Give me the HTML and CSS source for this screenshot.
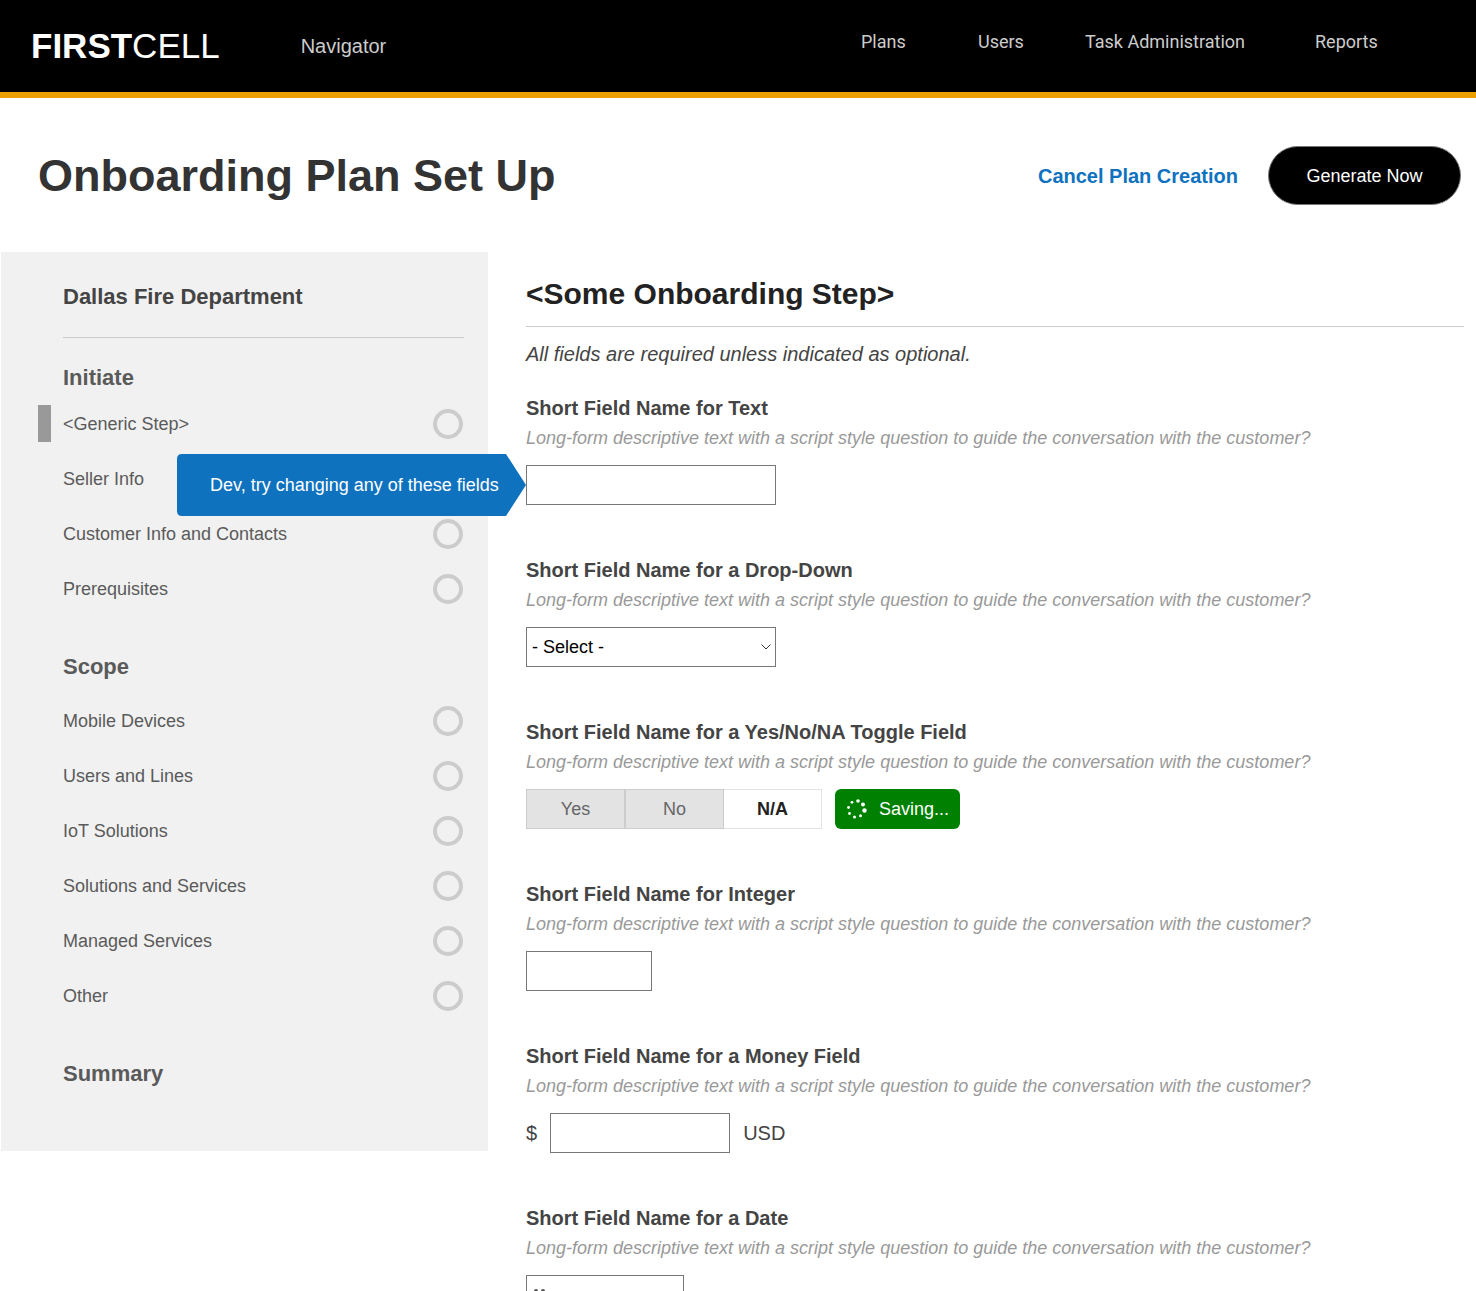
FILE: index.html
```html
<!DOCTYPE html>
<html lang="en">
<head>
<meta charset="utf-8">
<meta name="viewport" content="width=device-width, initial-scale=1">
<title>Onboarding Plan Set Up</title>
<link rel="stylesheet" href="styles.css">
</head>
<body>
<header class="topbar">
  <a class="brand" href="#"><b>FIRST</b>CELL</a>
  <a class="product" href="#">Navigator</a>
  <nav class="topnav" aria-label="Main">
    <a href="#">Plans</a>
    <a href="#">Users</a>
    <a href="#">Task Administration</a>
    <a href="#">Reports</a>
  </nav>
</header>

<div class="page-head">
  <h1>Onboarding Plan Set Up</h1>
  <a class="cancel" href="#">Cancel Plan Creation</a>
  <button class="generate" type="button">Generate Now</button>
</div>

<div class="columns">
  <aside class="sidebar">
    <h2 class="customer">Dallas Fire Department</h2>
    <nav aria-label="Plan steps">
      <h3 class="phase">Initiate</h3>
      <ul class="steps">
        <li><a class="step current" href="#">&lt;Generic Step&gt;<span class="ring"></span></a></li>
        <li><a class="step" href="#">Seller Info<span class="ring"></span></a></li>
        <li><a class="step" href="#">Customer Info and Contacts<span class="ring"></span></a></li>
        <li><a class="step" href="#">Prerequisites<span class="ring"></span></a></li>
      </ul>
      <h3 class="phase spaced">Scope</h3>
      <ul class="steps">
        <li><a class="step" href="#">Mobile Devices<span class="ring"></span></a></li>
        <li><a class="step" href="#">Users and Lines<span class="ring"></span></a></li>
        <li><a class="step" href="#">IoT Solutions<span class="ring"></span></a></li>
        <li><a class="step" href="#">Solutions and Services<span class="ring"></span></a></li>
        <li><a class="step" href="#">Managed Services<span class="ring"></span></a></li>
        <li><a class="step" href="#">Other<span class="ring"></span></a></li>
      </ul>
      <h3 class="phase spaced">Summary</h3>
    </nav>
  </aside>

  <main class="content">
    <h2 class="step-title">&lt;Some Onboarding Step&gt;</h2>
    <p class="note">All fields are required unless indicated as optional.</p>
    <form class="fields">
      <div class="field">
        <label class="name" for="text">Short Field Name for Text</label>
        <p class="help">Long-form descriptive text with a script style question to guide the conversation with the customer?</p>
        <div class="control">
          <input class="box wide" id="text" type="text">
          <div class="callout" role="note">
            <svg class="callout-shape" viewBox="0 0 349 62" aria-hidden="true"><path d="M5 0H329L349 31L329 62H5Q0 62 0 57V5Q0 0 5 0Z"/></svg>
            <span class="callout-text">Dev, try changing any of these fields</span>
          </div>
        </div>
      </div>
      <div class="field">
        <label class="name" for="choice">Short Field Name for a Drop-Down</label>
        <p class="help">Long-form descriptive text with a script style question to guide the conversation with the customer?</p>
        <div class="control">
          <div class="select">
            <select class="box wide" id="choice"><option>- Select -</option></select>
            <svg class="chevron" viewBox="0 0 10 6" aria-hidden="true"><path d="M.5.5L5 5L9.500.5"/></svg>
          </div>
        </div>
      </div>
      <div class="field" role="group" aria-labelledby="toggle-name">
        <span class="name" id="toggle-name">Short Field Name for a Yes/No/NA Toggle Field</span>
        <p class="help">Long-form descriptive text with a script style question to guide the conversation with the customer?</p>
        <div class="control">
          <div class="toggle">
            <button type="button" aria-pressed="false">Yes</button>
            <button type="button" aria-pressed="false">No</button>
            <button type="button" aria-pressed="true">N/A</button>
          </div>
          <div class="saving" role="status">
            <svg class="spinner" viewBox="0 0 22 22" aria-hidden="true">
              <circle cx="12" cy="3" r="1.800"/><circle cx="17" cy="6.500" r="2"/><circle cx="18.500" cy="12.500" r="2.200"/><circle cx="14.500" cy="17.800" r="1.500"/><circle cx="8.500" cy="19" r="1.500"/><circle cx="3.500" cy="15.500" r="1.400"/><circle cx="2.500" cy="9.500" r="1.400"/><circle cx="6" cy="4.300" r="1.400"/>
            </svg>
            Saving...
          </div>
        </div>
      </div>
      <div class="field">
        <label class="name" for="integer">Short Field Name for Integer</label>
        <p class="help">Long-form descriptive text with a script style question to guide the conversation with the customer?</p>
        <div class="control"><input class="box short" id="integer" type="text" inputmode="numeric"></div>
      </div>
      <div class="field">
        <label class="name" for="money">Short Field Name for a Money Field</label>
        <p class="help">Long-form descriptive text with a script style question to guide the conversation with the customer?</p>
        <div class="control money">
          <span>$</span>
          <input class="box amount" id="money" type="text" inputmode="decimal">
          <span>USD</span>
        </div>
      </div>
      <div class="field">
        <label class="name" for="date">Short Field Name for a Date</label>
        <p class="help">Long-form descriptive text with a script style question to guide the conversation with the customer?</p>
        <div class="control">
          <div class="date">
            <input class="box day" id="date" type="text">
            <svg class="calendar" viewBox="0 0 16 18" aria-hidden="true"><path d="M2 3Q2 1 4 1T6 3H9Q9 1 11 1T13 3H15V17H0V3Z"/></svg>
          </div>
        </div>
      </div>
    </form>
  </main>
</div>
</body>
</html>
```
FILE: styles.css
```css
* {
  box-sizing: border-box;
}

body {
  margin: 0;
  background: #fff;
  color: #444;
  font: 18px/24px "Liberation Sans", Arial, sans-serif;
}

h1, h2, h3, p, ul {
  margin: 0;
  padding: 0;
}

ul {
  list-style: none;
}

a {
  color: inherit;
  text-decoration: none;
}

button, input, select {
  font: inherit;
}

/* Top bar */
.topbar {
  display: flex;
  align-items: center;
  height: 98px;
  padding: 0 100px 0 31px;
  background: #000;
  border-bottom: 6px solid #ec9f00;
  color: #ccc;
}

.brand {
  color: #fff;
  font-size: 35px;
  line-height: 40px;
}

.product {
  margin-left: 81px;
  font-size: 20px;
}

.topnav {
  display: grid;
  grid-template-columns: 117px 107px 230px 61px;
  margin-left: auto;
  padding-bottom: 8px;
  font-family: Roboto, sans-serif;
}

/* Page heading */
.page-head {
  display: flex;
  align-items: center;
  gap: 30px;
  padding: 48px 15px 47px 38px;
}

h1 {
  margin-right: auto;
  color: #333;
  font-size: 45px;
  line-height: 52px;
}

.cancel {
  color: #0f72bf;
  font-size: 20px;
  font-weight: bold;
}

.generate {
  width: 193px;
  height: 59px;
  padding: 0;
  border: 1px solid #777;
  border-radius: 30px;
  background: #000;
  color: #fff;
}

/* Columns */
.columns {
  display: grid;
  grid-template-columns: 487px 1fr;
  align-items: start;
  gap: 38px;
  padding: 0 12px 0 1px;
}

/* Sidebar */
.sidebar {
  padding: 30px 24px 51px 62px;
  background: #f1f1f1;
}

.customer {
  padding-bottom: 25px;
  border-bottom: 1px solid #ccc;
  color: #444;
  font-size: 22px;
  line-height: 30px;
}

.phase {
  padding: 25px 0 3px;
  color: #5a5a5a;
  font-size: 22px;
  line-height: 30px;
}

.phase.spaced {
  padding: 36px 0 11px;
}

.step {
  display: flex;
  align-items: center;
  justify-content: space-between;
  position: relative;
  height: 55px;
  color: #5a5a5a;
}

.step.current::before {
  content: "";
  position: absolute;
  left: -25px;
  width: 13px;
  height: 37px;
  background: #999;
}

.ring {
  width: 30px;
  height: 30px;
  margin-right: 1px;
  border: 4px solid #ccc;
  border-radius: 50%;
}

/* Form */
.content {
  padding-top: 24px;
}

.step-title {
  padding-bottom: 14px;
  border-bottom: 1px solid #ccc;
  color: #222;
  font-size: 30px;
  line-height: 36px;
}

.note {
  padding: 15px 0 28px;
  font-size: 20px;
  font-style: italic;
}

.field {
  padding-bottom: 51px;
}

.name {
  display: block;
  font-size: 20px;
  font-weight: bold;
  line-height: 28px;
}

.help {
  padding: 4px 0 15px;
  color: #999;
  font-style: italic;
}

.control {
  display: flex;
  align-items: center;
  gap: 13px;
  position: relative;
}

.box {
  display: block;
  height: 40px;
  padding: 0 5px;
  border: 1px solid #777;
  border-radius: 0;
  background: #fff;
  color: #000;
  appearance: none;
}

.wide {
  width: 250px;
}

.short {
  width: 126px;
}

.amount {
  width: 180px;
}

.day {
  width: 158px;
  padding-left: 32px;
}

.select, .date {
  position: relative;
}

.chevron {
  position: absolute;
  top: 17px;
  right: 5px;
  width: 10px;
  height: 6px;
  fill: none;
  stroke: #333;
  pointer-events: none;
}

.calendar {
  position: absolute;
  top: 13px;
  left: 6px;
  width: 16px;
  height: 18px;
  fill: #555;
}

.money {
  font-size: 20px;
}

/* Callout pointing at the first field */
.callout {
  position: absolute;
  right: 100%;
  top: 50%;
  width: 349px;
  height: 62px;
  margin-top: -31px;
  color: #fff;
}

.callout-shape {
  position: absolute;
  inset: 0;
  fill: #0f72bf;
}

.callout-text {
  position: relative;
  display: block;
  padding-left: 33px;
  line-height: 62px;
  white-space: nowrap;
}

.toggle {
  display: flex;
  width: 296px;
}

.toggle button {
  flex: 1;
  height: 40px;
  padding: 0;
  border: 1px solid #ccc;
  background: #e3e3e3;
  color: #666;
}

.toggle button[aria-pressed="true"] {
  border-color: #e3e3e3;
  border-left: 0;
  background: #fff;
  color: #222;
  font-weight: bold;
}

.saving {
  display: flex;
  align-items: center;
  gap: 11px;
  width: 125px;
  height: 40px;
  padding-left: 11px;
  border-radius: 6px;
  background: #008000;
  color: #fff;
}

.spinner {
  width: 22px;
  height: 22px;
  fill: #fff;
}
```
